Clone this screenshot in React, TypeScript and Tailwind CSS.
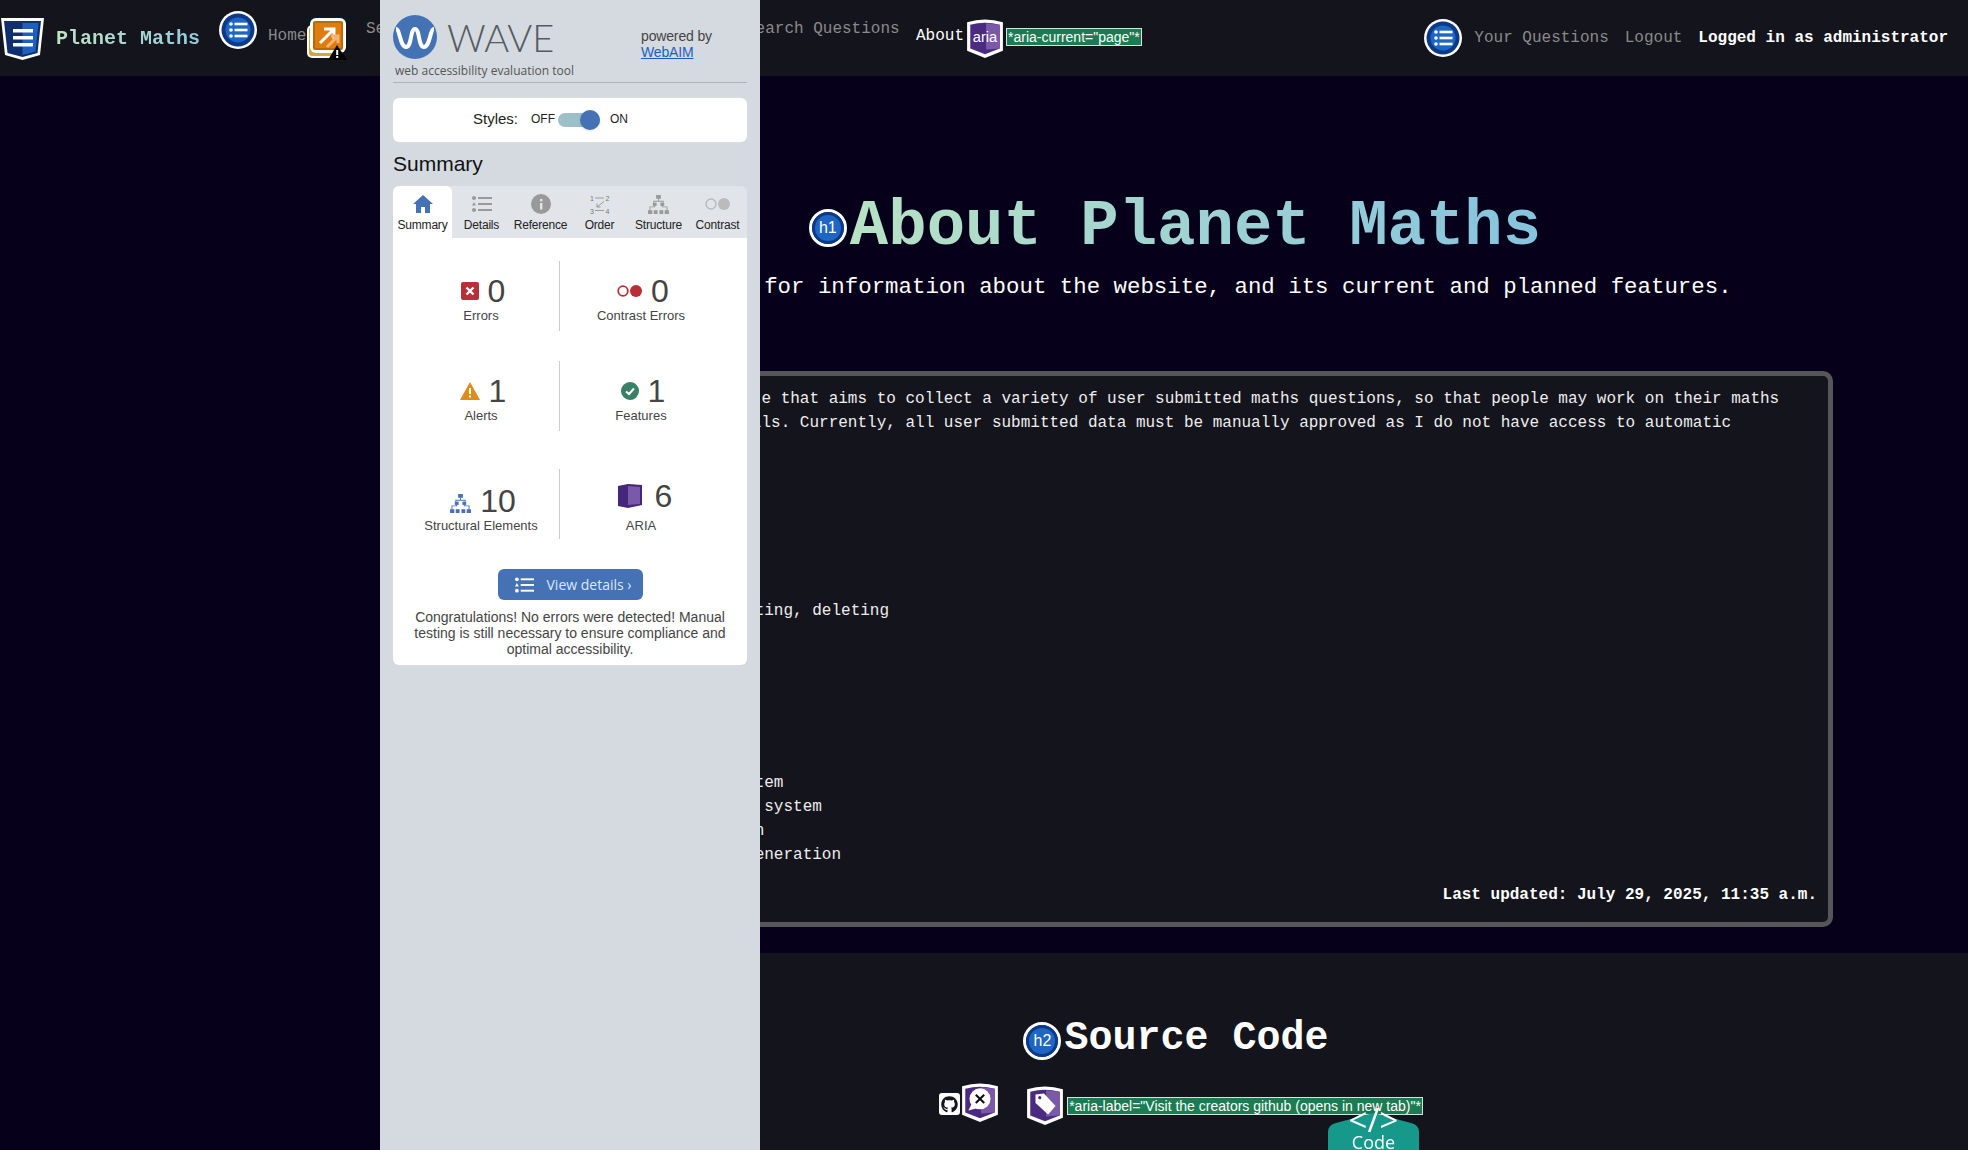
import React from 'react';
import { FaGithub } from 'react-icons/fa';

function ListBadge({ className }: { className?: string }) {
  return (
    <svg viewBox="0 0 38 38" className={className}>
      <circle cx="19" cy="19" r="19" fill="#fff" />
      <circle cx="19" cy="19" r="16.5" fill="#0d3a86" />
      <circle cx="19" cy="19" r="12.5" fill="#1e66c4" />
      <circle cx="12" cy="13" r="1.8" fill="#fff" />
      <circle cx="12" cy="19" r="1.8" fill="#fff" />
      <circle cx="12" cy="25" r="1.8" fill="#fff" />
      <rect x="15.5" y="11.7" width="13" height="2.6" fill="#fff" />
      <rect x="15.5" y="17.7" width="13" height="2.6" fill="#fff" />
      <rect x="15.5" y="23.7" width="13" height="2.6" fill="#fff" />
    </svg>
  );
}

function HeadingBadge({ label, className }: { label: string; className?: string }) {
  return (
    <span className={`relative shrink-0 flex items-center justify-center w-[38px] h-[38px] rounded-full bg-[#1e66c4] border-[3px] border-white outline-[3px] outline-[#0d3a86] -outline-offset-[6px] text-white text-[16px] font-['Liberation_Sans',sans-serif] ${className ?? ''}`}>
      {label}
    </span>
  );
}

function Shield({ className, children }: { className?: string; children?: React.ReactNode }) {
  return (
    <svg viewBox="0 0 36 38" className={className}>
      <path d="M1 4 Q18 -1 35 4 V31 L18 38 L1 31 Z" fill="#fff" />
      <path d="M4 6.5 Q18 2.5 32 6.5 V29 L18 34.5 L4 29 Z" fill="#4b2a82" />
      <path d="M19 5 L32 6.5 V29 L19 30 Z" fill="#7a5aa8" />
      {children}
    </svg>
  );
}

function AlertStack({ className }: { className?: string }) {
  return (
    <svg viewBox="0 0 40 42" className={className}>
      <rect x="0" y="7" width="30" height="33" rx="5" fill="#fff" />
      <rect x="2" y="9" width="27" height="29" rx="3" fill="#d9a53a" />
      <rect x="3" y="0" width="36" height="35" rx="6" fill="#fff" />
      <rect x="6" y="3" width="30" height="29" rx="2" fill="#b96a08" />
      <rect x="8" y="5" width="26" height="25" fill="#df7d0c" />
      <path d="M13 25 L26 12 M17 11 H27 V21" stroke="#fff" strokeWidth="3" fill="none" />
      <path d="M20 29 L30 19 M24 18 H31 V25" stroke="#f2b27a" strokeWidth="3" fill="none" />
      <path d="M30 27 L40 42 H21 Z" fill="#000" />
      <rect x="29.2" y="32" width="2" height="5" fill="#fff" />
      <rect x="29.2" y="38" width="2" height="2" fill="#fff" />
    </svg>
  );
}

function TreeIcon({ className, color }: { className?: string; color: string }) {
  return (
    <svg viewBox="0 0 22 20" className={className} fill={color}>
      <rect x="8.5" y="0" width="5" height="4" />
      <rect x="5" y="8" width="4" height="3.5" />
      <rect x="13" y="8" width="4" height="3.5" />
      <rect x="0" y="16" width="4.5" height="4" />
      <rect x="6" y="16" width="4" height="4" />
      <rect x="12" y="16" width="4" height="4" />
      <rect x="17.5" y="16" width="4.5" height="4" />
      <path d="M10.5 4h1v2h5v2h-1V7h-9v1h-1V6h5z" />
      <path d="M6.5 11.5h1V13h-5v3h-1v-4h5z" />
      <path d="M14.5 11.5h1V12h5v4h-1v-3h-5z" />
    </svg>
  );
}

function ListIcon({ className, color }: { className?: string; color: string }) {
  return (
    <svg viewBox="0 0 20 16" className={className} fill={color}>
      <circle cx="2" cy="2" r="2" />
      <path d="M2 6 L4 9.5 H0 Z" />
      <circle cx="2" cy="14" r="2" />
      <rect x="6" y="1" width="14" height="2" />
      <rect x="6" y="7" width="14" height="2" />
      <rect x="6" y="13" width="14" height="2" />
    </svg>
  );
}

function Tab({ label, active, children }: { label: string; active?: boolean; children: React.ReactNode }) {
  return (
    <div className={`w-[59px] h-[52px] flex flex-col items-center rounded-t-md ${active ? 'bg-white' : ''}`}>
      <div className="h-[24px] mt-[6px] flex items-center justify-center">{children}</div>
      <span className="text-[12px] leading-[14px] mt-[2px] tracking-[-0.2px] text-[#222]">{label}</span>
    </div>
  );
}

function Stat({ icon, value, label, width }: { icon: React.ReactNode; value: string; label: string; width: string }) {
  return (
    <div className={`${width} flex flex-col items-center`}>
      <div className="flex items-center h-[36px] gap-[9px] ml-[4px] mt-[4px]">
        {icon}
        <span className="text-[32px] leading-[36px] text-[#444]">{value}</span>
      </div>
      <span className="text-[13px] leading-[14px] text-[#444]">{label}</span>
    </div>
  );
}

function WavePanel() {
  return (
    <aside className="fixed top-0 left-[380px] w-[380px] h-screen bg-[#d4dae0] px-[13px] font-['Liberation_Sans',sans-serif] z-10">
      <div className="h-[83px] border-b border-[#aeb4ba] relative">
        <div className="flex items-center pt-[15px]">
          <svg viewBox="0 0 44 44" className="w-[44px] h-[44px]">
            <circle cx="22" cy="22" r="22" fill="#4472b4" />
            <path d="M3 14 C7 14 7 32 13 32 C19 32 17 14 22 14 C27 14 25 32 31 32 C37 32 37 14 41 14" stroke="#fff" strokeWidth="4" fill="none" />
          </svg>
          <span className="ml-[10px] text-[38px] leading-[44px] font-light text-[#555b60] font-['Lato',sans-serif]">WAVE</span>
        </div>
        <div className="text-[12px] leading-[16px] mt-[4px] ml-[2px] text-[#555] font-['Open_Sans',sans-serif]">web accessibility evaluation tool</div>
        <div className="absolute left-[248px] top-[28px] text-[14px] leading-[16px] text-[#444] tracking-[-0.15px]">
          powered by
          <br />
          <a className="text-[#1a5fc0] underline">WebAIM</a>
        </div>
      </div>

      <div className="mt-[15px] h-[44px] bg-white rounded-md flex items-center pl-[80px] text-[#222]">
        <span className="text-[15px] mr-[13px] -mt-[1px]">Styles:</span>
        <span className="text-[12px] -mt-[2px]">OFF</span>
        <span className="relative ml-[3px] w-[42px] h-[14px] rounded-full bg-[#9dbfc8]">
          <span className="absolute right-0 -top-[3px] w-[20px] h-[20px] rounded-full bg-[#4472b4] shadow"></span>
        </span>
        <span className="text-[12px] ml-[10px] -mt-[2px]">ON</span>
      </div>

      <h2 className="text-[21px] leading-[24px] mt-[10px] text-[#111]">Summary</h2>

      <div className="mt-[10px] h-[52px] bg-[#e1e5e9] rounded-t-md flex">
        <Tab label="Summary" active>
          <svg viewBox="0 0 20 18" className="w-[20px] h-[18px]" fill="#4472b4">
            <path d="M10 0 L20 9 H17 V18 H12 V12 H8 V18 H3 V9 H0 Z" />
          </svg>
        </Tab>
        <Tab label="Details">
          <ListIcon className="w-[20px] h-[16px]" color="#999" />
        </Tab>
        <Tab label="Reference">
          <svg viewBox="0 0 20 20" className="w-[20px] h-[20px]">
            <circle cx="10" cy="10" r="10" fill="#999" />
            <rect x="9" y="9" width="2.4" height="6.5" fill="#e1e5e9" />
            <rect x="9" y="5" width="2.4" height="2.4" fill="#e1e5e9" />
          </svg>
        </Tab>
        <Tab label="Order">
          <svg viewBox="0 0 20 20" className="w-[20px] h-[20px]" fill="#777" stroke="#888" strokeWidth="0.8">
            <text x="0" y="6.5" fontSize="7" strokeWidth="0" fontFamily="Liberation Sans">1</text>
            <text x="15.5" y="6.5" fontSize="7" strokeWidth="0" fontFamily="Liberation Sans">2</text>
            <text x="0" y="19.5" fontSize="7" strokeWidth="0" fontFamily="Liberation Sans">3</text>
            <text x="15.5" y="19.5" fontSize="7" strokeWidth="0" fontFamily="Liberation Sans">4</text>
            <path d="M5 4H14M5 16.5H14M14 7.5L7 13M7 9.5V13H10.5" fill="none" />
          </svg>
        </Tab>
        <Tab label="Structure">
          <TreeIcon className="w-[21px] h-[19px]" color="#999" />
        </Tab>
        <Tab label="Contrast">
          <svg viewBox="0 0 26 12" className="w-[26px] h-[12px]">
            <circle cx="6" cy="6" r="5" fill="none" stroke="#bbb" strokeWidth="1.5" />
            <circle cx="19" cy="6" r="6" fill="#bbb" />
          </svg>
        </Tab>
      </div>

      <div className="h-[427px] bg-white rounded-b-md pl-[10px]">
        <div className="flex pt-[23px]">
          <div className="flex h-[70px] items-center">
            <Stat
              width="w-[156px]"
              value="0"
              label="Errors"
              icon={
                <svg viewBox="0 0 18 18" className="w-[18px] h-[18px]">
                  <rect width="18" height="18" rx="2" fill="#b92f38" />
                  <path d="M5.5 5.5L12.5 12.5M12.5 5.5L5.5 12.5" stroke="#fff" strokeWidth="2.4" />
                </svg>
              }
            />
          </div>
          <div className="w-px h-[70px] bg-[#ccc]"></div>
          <div className="flex h-[70px] items-center">
            <Stat
              width="w-[162px]"
              value="0"
              label="Contrast Errors"
              icon={
                <svg viewBox="0 0 25 12" className="w-[25px] h-[12px]">
                  <circle cx="6" cy="6" r="4.8" fill="none" stroke="#b92f38" strokeWidth="1.8" />
                  <circle cx="19" cy="6" r="6" fill="#b92f38" />
                </svg>
              }
            />
          </div>
        </div>
        <div className="flex pt-[30px]">
          <div className="flex h-[70px] items-center">
            <Stat
              width="w-[156px]"
              value="1"
              label="Alerts"
              icon={
                <svg viewBox="0 0 20 18" className="w-[20px] h-[18px]">
                  <path d="M10 0L20 18H0Z" fill="#e08c1c" />
                  <rect x="9" y="6" width="2" height="6" fill="#fff" />
                  <rect x="9" y="13.5" width="2" height="2" fill="#fff" />
                </svg>
              }
            />
          </div>
          <div className="w-px h-[70px] bg-[#ccc]"></div>
          <div className="flex h-[70px] items-center">
            <Stat
              width="w-[162px]"
              value="1"
              label="Features"
              icon={
                <svg viewBox="0 0 18 18" className="w-[18px] h-[18px]">
                  <circle cx="9" cy="9" r="9" fill="#3a7f68" />
                  <path d="M5 9.5L8 12L13 6.5" stroke="#fff" strokeWidth="2" fill="none" />
                </svg>
              }
            />
          </div>
        </div>
        <div className="flex pt-[38px]">
          <div className="flex h-[70px] items-start pt-[10px]">
            <Stat width="w-[156px]" value="10" label="Structural Elements" icon={<TreeIcon className="w-[21px] h-[19px] mt-[5px]" color="#4472b4" />} />
          </div>
          <div className="w-px h-[70px] bg-[#ccc]"></div>
          <div className="flex h-[70px] items-start pt-[9px]">
            <div className="w-[162px] flex flex-col items-center">
              <div className="flex items-center h-[36px] gap-[13px] ml-[8px]">
                <svg viewBox="0 0 24 24" className="w-[24px] h-[24px]">
                  <path d="M0 2L10 0L24 1V21L10 24L0 22Z" fill="#45267a" />
                  <path d="M10 2L22 3V20L10 21Z" fill="#7a5aa8" />
                </svg>
                <span className="text-[32px] leading-[36px] text-[#444]">6</span>
              </div>
              <span className="text-[13px] leading-[14px] mt-[5px] text-[#444]">ARIA</span>
            </div>
          </div>
        </div>
        <div className="-ml-[10px] mt-[30px] flex justify-center">
          <button className="w-[145px] h-[31px] bg-[#4472b4] rounded-md flex items-center pl-[17px] text-[14px] text-[#dde8f4] font-['Open_Sans',sans-serif]">
            <ListIcon className="w-[19px] h-[16px] mr-[13px]" color="#fff" />
            View details ›
          </button>
        </div>
        <p className="-ml-[10px] mt-[9px] px-[18px] text-center text-[14px] leading-[16px] text-[#444]">
          Congratulations! No errors were detected! Manual testing is still necessary to ensure compliance and optimal accessibility.
        </p>
      </div>
    </aside>
  );
}

function Nav() {
  return (
    <nav className="h-[76px] bg-[#14141c] flex items-center text-[16px] text-[#8a8a8a]">
      <svg viewBox="0 0 44 42" className="w-[44px] h-[42px] ml-[1px] mt-[1px] shrink-0">
        <path d="M0 0H43L39 37L21.5 42L4 37Z" fill="#fff" />
        <path d="M3 3H40L36.5 35L21.5 39L6.5 35Z" fill="#0f2f6e" />
        <path d="M21.5 5H37.5L34.5 33.5L21.5 37Z" fill="#1e5fc0" />
        <rect x="12" y="11" width="20" height="3.5" fill="#fff" />
        <rect x="12" y="18" width="20" height="3.5" fill="#fff" />
        <rect x="12" y="25" width="20" height="3.5" fill="#fff" />
      </svg>
      <a className="ml-[11px] mt-[2px] text-[20px] font-bold bg-gradient-to-r from-[#bfe3c3] to-[#8ec6de] bg-clip-text text-transparent whitespace-nowrap w-[163px]">Planet Maths</a>
      <ListBadge className="w-[38px] h-[38px] mb-[16px] shrink-0" />
      <a className="ml-[11px] mb-[4px] w-[39px]">Home</a>
      <AlertStack className="w-[40px] h-[42px] mb-[-2px] shrink-0" />
      <a className="ml-[19px] mb-[18px] w-[380px] shrink-0">Se</a>
      <a className="mb-[18px] w-[170px] shrink-0">Search Questions</a>
      <a className="mb-[4px] text-white w-[51px] shrink-0">About</a>
      <Shield className="w-[38px] h-[40px] -ml-px shrink-0">
        <text x="18" y="23" textAnchor="middle" fontSize="14" fill="#fff" fontFamily="Liberation Sans">aria</text>
      </Shield>
      <span className="ml-[2px] mb-[2px] border border-[#cfe8d8] bg-[#1d7a52] text-white text-[14px] leading-[16px] px-px font-['Liberation_Sans',sans-serif] whitespace-nowrap">*aria-current="page"*</span>
      <div className="ml-auto flex items-center pr-[20px]">
        <ListBadge className="w-[38px] h-[38px] mr-[12px] shrink-0" />
        <a className="mr-[16px]">Your Questions</a>
        <a className="mr-[16px]">Logout</a>
        <span className="text-white font-bold">Logged in as administrator</span>
      </div>
    </nav>
  );
}

function Main() {
  return (
    <main className="h-[877px] bg-[#06001a] ml-[380px] flex flex-col items-center">
      <div className="flex items-center mt-[115px] h-[72px] ml-[2px]">
        <HeadingBadge label="h1" className="mr-[3px] mt-[1px]" />
        <h1 className="text-[64px] leading-[72px] font-bold bg-gradient-to-r from-[#b8e2c4] to-[#86c3de] bg-clip-text text-transparent whitespace-nowrap">About Planet Maths</h1>
      </div>
      <p className="mt-[8px] text-[22.4px] leading-[32px] text-white whitespace-nowrap">Check here for information about the website, and its current and planned features.</p>
      <section className="mt-[68px] w-[1318px] h-[556px] bg-[#14141c] border-[5px] border-[#55555a] rounded-[10px] pt-[11px] px-[11px] text-[16px] leading-[24px] text-[#eee]">
        <p>
          Planet Maths is a website that aims to collect a variety of user submitted maths questions, so that people may work on their maths and help grow their skills. Currently, all user submitted data must be manually approved as I do not have access to automatic moderation.
        </p>
        <ul className="mt-[20px] ml-[22px]">
          <li>Question browsing</li>
          <li>Question searching</li>
          <li>User accounts</li>
          <li>Question submission</li>
          <li>Question answers</li>
          <li>Question posting, editing, deleting</li>
          <li>Admin approvals</li>
          <li>Topic filters</li>
        </ul>
        <h3 className="mt-[28px] font-bold">Planned features</h3>
        <ul className="ml-[22px]">
          <li>Dark mode</li>
          <li>Topic pages</li>
          <li>Question approval system</li>
          <li>User question ranking system</li>
          <li>Automatic verification</li>
          <li>Randomised question generation</li>
        </ul>
        <p className="mt-[16px] text-right font-bold text-white">Last updated: July 29, 2025, 11:35 a.m.</p>
      </section>
    </main>
  );
}

function Footer() {
  return (
    <footer className="h-[197px] bg-[#14141c] ml-[380px] flex flex-col items-center">
      <div className="flex items-center mt-[66px] h-[40px] ml-[4px]">
        <HeadingBadge label="h2" className="mr-[-2px] mt-[4px]" />
        <h2 className="ml-[5px] text-[40px] leading-[40px] font-bold text-white whitespace-nowrap">Source Code</h2>
      </div>
      <div className="mt-[23px] ml-[14px] flex items-center">
        <a className="w-[21px] h-[22px] bg-white rounded-[3px] flex items-center justify-center mb-[2px]">
          <FaGithub className="w-[17px] h-[17px] text-[#14141c]" />
        </a>
        <Shield className="w-[38px] h-[40px] ml-px mb-[6px] shrink-0">
          <circle cx="18" cy="16" r="10" fill="#fff" />
          <path d="M10 21L7 27L15 25Z" fill="#fff" />
          <path d="M14 12L22 20M22 12L14 20" stroke="#111" strokeWidth="2" />
        </Shield>
        <div className="w-[27px]"></div>
        <Shield className="w-[38px] h-[40px] shrink-0">
          <path d="M9 9L17 8L28 20L21 28L9 17Z" fill="#fff" />
          <circle cx="13" cy="12" r="1.5" fill="#4b2a82" />
        </Shield>
        <span className="ml-[3px] mt-[2px] border border-[#cfe8d8] bg-[#1d7a52] text-white text-[14px] leading-[16px] px-px font-['Liberation_Sans',sans-serif] whitespace-nowrap">*aria-label="Visit the creators github (opens in new tab)"*</span>
      </div>
    </footer>
  );
}

export default function App() {
  return (
    <div className="relative h-screen overflow-hidden bg-[#06001a] font-['Liberation_Mono',monospace]">
      <Nav />
      <Main />
      <Footer />
      <WavePanel />
      <div className="fixed bottom-0 left-[1328px] w-[91px] h-[37px] flex flex-col items-center text-white font-['Open_Sans',sans-serif]">
        <svg viewBox="0 0 91 37" className="absolute inset-0 w-full h-full">
          <path d="M0 37 V19 Q0 12 8 10 L45.5 0 L83 10 Q91 12 91 19 V37 Z" fill="#16998a" />
        </svg>
        <span className="relative text-[33px] leading-[26px] -mt-[6px]">&lt;/&gt;</span>
        <span className="relative text-[18px] leading-[16px] mt-px">Code</span>
      </div>
    </div>
  );
}
